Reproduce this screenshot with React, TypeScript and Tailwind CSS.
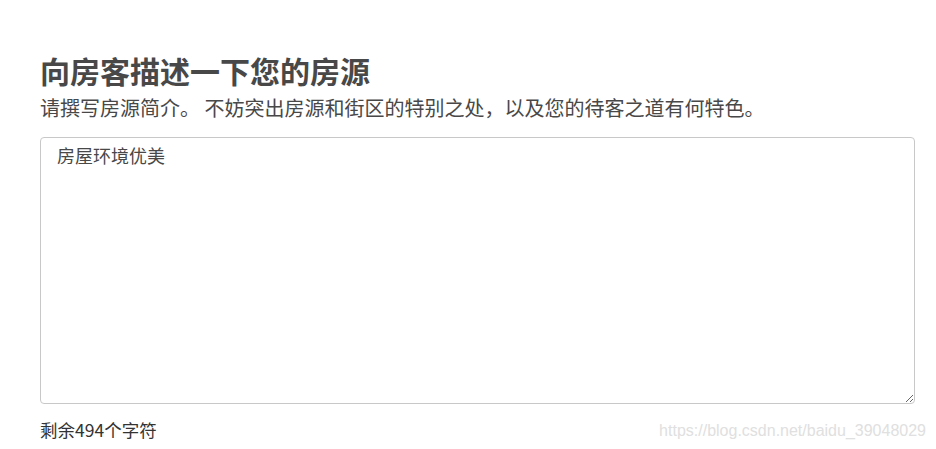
import React, { useState } from 'react';

const MAX = 500;

const App = () => {
  const [text, setText] = useState('房屋环境优美');

  return (
    <div className="relative w-[936px] h-[449px] bg-white overflow-hidden font-['Noto_Sans_CJK_SC',sans-serif] text-[#484848]">
      <div className="ml-10 w-[875px] pt-[50px]">
        <h1 className="text-[30px] leading-[40px] font-bold">向房客描述一下您的房源</h1>
        <p className="mt-[4px] text-[20px] leading-[28px]">
          请撰写房源简介。 不妨突出房源和街区的特别之处，以及您的待客之道有何特色。
        </p>
        <textarea
          value={text}
          onChange={(e) => setText(e.target.value.slice(0, MAX))}
          className="mt-[15px] block w-full h-[267px] rounded border border-[#c8c8c8] px-4 py-[3px] text-[18px] leading-[28px] text-[#484848] outline-none resize-y"
        />
        <div className="mt-[13px] text-[17.5px] leading-[26px] text-[#333]">
          剩余{MAX - text.length}个字符
        </div>
      </div>
      {/* watermark */}
      <span className="absolute right-[10px] bottom-[7px] text-[16px] leading-[22px] text-[#e0e0e0] font-['Liberation_Sans',sans-serif]">
        https://blog.csdn.net/baidu_39048029
      </span>
    </div>
  );
};

export default App;
